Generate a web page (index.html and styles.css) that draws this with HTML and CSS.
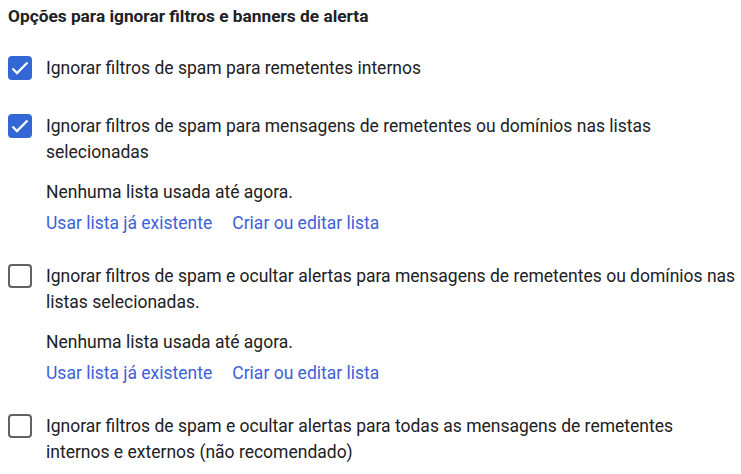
FILE: index.html
```html
<!DOCTYPE html>
<html lang="pt-BR">
<head>
    <meta charset="UTF-8">
    <meta name="viewport" content="width=device-width, initial-scale=1.0">
    <title>Opções de spam</title>
    <link rel="stylesheet" href="styles.css">
</head>
<body>
    <!-- Section title -->
    <h1 class="section-title">Opções para ignorar filtros e banners de alerta</h1>

    <div class="options">
        <!-- Option 1 -->
        <label class="option">
            <span class="checkbox checked">
                <svg viewBox="0 0 20 20" width="20" height="20"><path d="M2.5 10.5l4.5 4.5 10.5-10.5" fill="none" stroke="#fff" stroke-width="2.3"/></svg>
            </span>
            <span class="option-text">Ignorar filtros de spam para remetentes internos</span>
        </label>

        <!-- Option 2 -->
        <div class="option-group">
            <label class="option">
                <span class="checkbox checked">
                    <svg viewBox="0 0 20 20" width="20" height="20"><path d="M2.5 10.5l4.5 4.5 10.5-10.5" fill="none" stroke="#fff" stroke-width="2.3"/></svg>
                </span>
                <span class="option-text">Ignorar filtros de spam para mensagens de remetentes ou domínios nas listas selecionadas</span>
            </label>
            <div class="list-info">
                <div class="list-empty">Nenhuma lista usada até agora.</div>
                <div class="list-links">
                    <a href="#">Usar lista já existente</a>
                    <a href="#">Criar ou editar lista</a>
                </div>
            </div>
        </div>

        <!-- Option 3 -->
        <div class="option-group">
            <label class="option">
                <span class="checkbox"></span>
                <span class="option-text">Ignorar filtros de spam e ocultar alertas para mensagens de remetentes ou domínios nas listas selecionadas.</span>
            </label>
            <div class="list-info">
                <div class="list-empty">Nenhuma lista usada até agora.</div>
                <div class="list-links">
                    <a href="#">Usar lista já existente</a>
                    <a href="#">Criar ou editar lista</a>
                </div>
            </div>
        </div>

        <!-- Option 4 -->
        <label class="option">
            <span class="checkbox"></span>
            <span class="option-text">Ignorar filtros de spam e ocultar alertas para todas as mensagens de remetentes internos e externos (não recomendado)</span>
        </label>
    </div>
</body>
</html>
```

FILE: styles.css
```css
body {
    margin: 0;
    padding: 4px 4px 0 8px;
    font-family: Roboto, "Liberation Sans", Arial, sans-serif;
    color: #202124;
    background-color: #fff;
}

/* Title */
.section-title {
    font-size: 17.3px;
    font-weight: bold;
    line-height: 24px;
    margin: 0 0 27px 0;
}

/* Options list */
.options {
    display: flex;
    flex-direction: column;
    gap: 32px;
}

.option {
    display: flex;
    align-items: flex-start;
    gap: 14px;
    font-size: 17.5px;
    line-height: 26px;
    cursor: pointer;
}

.checkbox {
    flex: none;
    box-sizing: border-box;
    width: 24px;
    height: 24px;
    margin-top: 1px;
    border: 2px solid #5f6368;
    border-radius: 4px;
    display: flex;
    align-items: center;
    justify-content: center;
}

.checkbox.checked {
    background-color: #3367d6;
    border-color: #3367d6;
}

/* Lists under an option */
.list-info {
    margin: 12px 0 -8px 38px;
    font-size: 17.5px;
    line-height: 31px;
}

.list-links {
    display: flex;
    gap: 20px;
}

.list-links a {
    color: #4060d8;
    text-decoration: none;
}
```
